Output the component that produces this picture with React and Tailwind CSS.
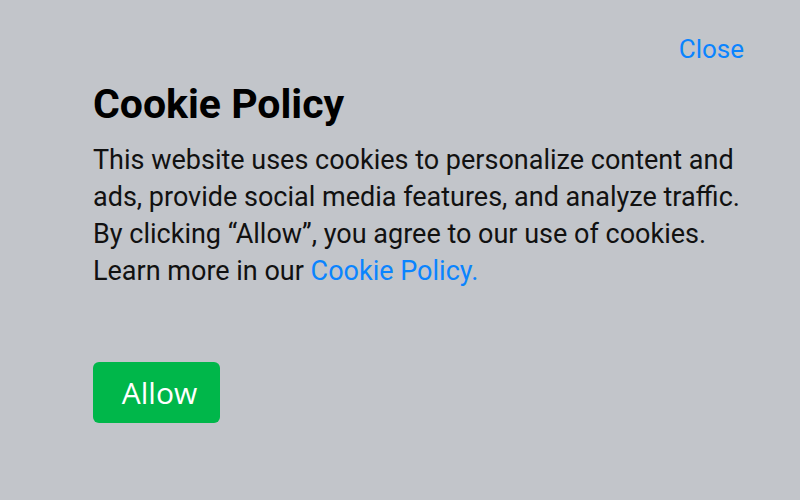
import React from "react";

const App = () => {
  return (
    <div className="w-[800px] h-[500px] bg-[#c2c5ca] flex flex-col pl-[93px] pr-[56px] pt-[34px] font-['Roboto',sans-serif]">
      {/* Close */}
      <div className="flex justify-end">
        <button className="text-[26px] leading-[30px] text-[#0a84ff] font-['Roboto',sans-serif]">
          Close
        </button>
      </div>

      {/* Text */}
      <h1 className="mt-[15px] text-[41px] leading-[50px] font-bold text-black">
        Cookie Policy
      </h1>
      <p className="mt-[13px] text-[27px] leading-[37px] text-[#111]">
        This website uses cookies to personalize content and ads, provide
        social media features, and analyze traffic. By clicking “Allow”, you
        agree to our use of cookies. Learn more in our{" "}
        <a href="#" className="text-[#0a84ff]">
          Cookie Policy.
        </a>
      </p>

      {/* Button */}
      <div className="mt-[72px]">
        <button className="w-[127px] h-[61px] pl-[6px] rounded-[6px] bg-[#00b74a] text-white text-[30px] font-['Open_Sans',sans-serif]">
          Allow
        </button>
      </div>
    </div>
  );
};

export default App;
